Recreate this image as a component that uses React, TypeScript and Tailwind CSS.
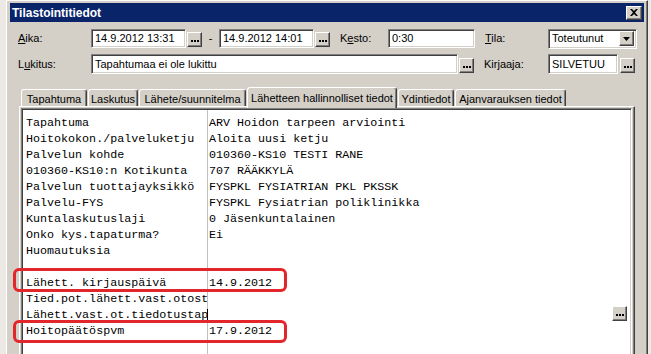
import React from "react";

const ui = "font-['Liberation_Sans',Arial,sans-serif]";
const mono = "font-['Liberation_Mono','Courier_New',monospace]";

function Dots() {
  return (
    <div className="w-[15px] h-[15px] shrink-0 bg-[#d4d0c8] border border-t-white border-l-white border-r-[#404040] border-b-[#404040] shadow-[inset_-1px_-1px_0_#808080] flex items-center justify-center gap-[1px] pt-[3px]">
      <span className="w-[2px] h-[2px] bg-black" />
      <span className="w-[2px] h-[2px] bg-black" />
      <span className="w-[2px] h-[2px] bg-black" />
    </div>
  );
}

function Edit({ className, children }: { className: string; children?: React.ReactNode }) {
  return (
    <div
      className={`${className} shrink-0 bg-white border border-t-[#808080] border-l-[#808080] border-b-white border-r-white shadow-[inset_1px_1px_0_#404040,inset_-1px_-1px_0_#d4d0c8] flex items-center pl-[3px] text-[11px] text-black whitespace-nowrap overflow-hidden`}
    >
      {children}
    </div>
  );
}

function Tab({ className, label, active }: { className: string; label: string; active?: boolean }) {
  if (active) {
    return (
      <div
        className={`${className} relative z-10 h-[21px] -mb-[2px] bg-[#d4d0c8] border-t border-l border-white border-r border-r-[#404040] shadow-[inset_-1px_0_0_#808080] rounded-t-[3px] flex items-start justify-center pt-[2px] text-[11px] text-black`}
      >
        {label}
      </div>
    );
  }
  return (
    <div
      className={`${className} h-[17px] bg-[#d4d0c8] border-t border-l border-white border-r border-r-[#404040] shadow-[inset_-1px_0_0_#808080] rounded-t-[3px] flex items-start justify-center pt-[1px] text-[11px] text-black`}
    >
      {label}
    </div>
  );
}

const left = [
  "Tapahtuma",
  "Hoitokokon./palveluketju",
  "Palvelun kohde",
  "010360-KS10:n Kotikunta",
  "Palvelun tuottajayksikkö",
  "Palvelu-FYS",
  "Kuntalaskutuslaji",
  "Onko kys.tapaturma?",
  "Huomautuksia",
  "",
  "Lähett. kirjauspäivä",
  "Tied.pot.lähett.vast.otost",
  "Lähett.vast.ot.tiedotustap",
  "Hoitopäätöspvm",
  "",
];

const right = [
  "ARV Hoidon tarpeen arviointi",
  "Aloita uusi ketju",
  "010360-KS10 TESTI RANE",
  "707 RÄÄKKYLÄ",
  "FYSPKL FYSIATRIAN PKL PKSSK",
  "FYSPKL Fysiatrian poliklinikka",
  "0 Jäsenkuntalainen",
  "Ei",
  "",
  "",
  "14.9.2012",
  "",
  "",
  "17.9.2012",
  "",
];

export default function App() {
  return (
    <div className={`${ui} relative w-[651px] h-[354px] overflow-hidden bg-[#ece9e4]`}>
      {/* window */}
      <div className="ml-[6px] mr-[3px] h-[380px] bg-[#d4d0c8] border-l border-t border-l-white border-t-white border-r border-r-[#404040] shadow-[inset_-1px_0_0_#808080] pt-[2px] pl-[3px] pr-[3px]">
        {/* title bar */}
        <div className="h-[19px] bg-[#0a246a] flex items-center justify-between pl-[2px] pr-[2px]">
          <span className="text-white font-bold text-[12px] leading-none">Tilastointitiedot</span>
          <div className="w-[16px] h-[14px] bg-[#d4d0c8] border border-t-white border-l-white border-r-[#404040] border-b-[#404040] shadow-[inset_-1px_-1px_0_#808080] flex items-center justify-center">
            <svg width="8" height="7" viewBox="0 0 8 7">
              <path d="M0 0h2l2 2 2-2h2L5 3.5 8 7H6L4 5 2 7H0l3-3.5z" fill="#000" />
            </svg>
          </div>
        </div>

        {/* row 1 */}
        <div className="mt-[7px] h-[19px] flex items-center text-[11px] text-black">
          <div className="w-[81px] pl-[8px]">
            <span className="underline">A</span>ika:
          </div>
          <Edit className="w-[95px] h-[19px]">14.9.2012 13:31</Edit>
          <div className="ml-[1px] mt-[2px]">
            <Dots />
          </div>
          <div className="w-[17px] text-center">-</div>
          <Edit className="w-[95px] h-[19px]">14.9.2012 14:01</Edit>
          <div className="ml-[1px] mt-[2px]">
            <Dots />
          </div>
          <div className="w-[58px] pl-[10px]">
            K<span className="underline">e</span>sto:
          </div>
          <Edit className="w-[87px] h-[19px]">0:30</Edit>
          <div className="w-[73px] pl-[10px]">
            <span className="underline">T</span>ila:
          </div>
          <div className="w-[89px] h-[20px] bg-white border border-t-[#808080] border-l-[#808080] border-b-white border-r-white shadow-[inset_1px_1px_0_#404040,inset_-1px_-1px_0_#d4d0c8] flex items-center pl-[3px] pr-[2px]">
            <span className="flex-1">Toteutunut</span>
            <div className="w-[15px] h-[15px] bg-[#d4d0c8] border border-t-white border-l-white border-r-[#404040] border-b-[#404040] shadow-[inset_-1px_-1px_0_#808080] flex items-center justify-center">
              <svg width="7" height="4" viewBox="0 0 7 4">
                <path d="M0 0h7L3.5 4z" fill="#000" />
              </svg>
            </div>
          </div>
        </div>

        {/* row 2 */}
        <div className="mt-[6px] h-[20px] flex items-center text-[11px] text-black">
          <div className="w-[81px] pl-[8px]">
            L<span className="underline">u</span>kitus:
          </div>
          <Edit className="w-[367px] h-[20px]">Tapahtumaa ei ole lukittu</Edit>
          <div className="ml-[1px] mt-[2px]">
            <Dots />
          </div>
          <div className="w-[74px] pl-[10px]">Kirjaaja:</div>
          <Edit className="w-[70px] h-[20px]">SILVETUU</Edit>
          <div className="ml-[2px] mt-[2px]">
            <Dots />
          </div>
        </div>

        {/* tabs */}
        <div className="mt-[13px] ml-[9px] w-[616px]">
          <div className="h-[19px] flex items-end gap-[1px] pl-[2px]">
            <Tab className="w-[66px]" label="Tapahtuma" />
            <Tab className="w-[50px]" label="Laskutus" />
            <Tab className="w-[107px]" label="Lähete/suunnitelma" />
            <Tab className="w-[150px]" label="Lähetteen hallinnolliset tiedot" active />
            <Tab className="w-[56px]" label="Ydintiedot" />
            <Tab className="w-[111px]" label="Ajanvarauksen tiedot" />
          </div>
          <div className="h-[260px] border-t border-l border-white border-r border-r-[#404040] shadow-[inset_-1px_0_0_#808080] pl-[1px] pt-[1px] pr-[2px]">
            <div className="relative h-[258px] bg-white border border-t-[#808080] border-l-[#808080] border-b-white border-r-white shadow-[inset_1px_1px_0_#404040,inset_-1px_-1px_0_#d4d0c8] p-[1px] flex">
              <div className={`${mono} w-[185px] shrink-0 border-r border-[#c0c0c0] pt-[5px] pl-[3px] overflow-hidden text-[11.7px] text-black`}>
                {left.map((t, i) => (
                  <div key={i} className="h-[16px] leading-[16px] whitespace-nowrap">
                    {t}
                  </div>
                ))}
              </div>
              <div className={`${mono} flex-1 pt-[5px] pl-[1px] text-[11.7px] text-black`}>
                {right.map((t, i) => (
                  <div key={i} className="h-[16px] leading-[16px] whitespace-nowrap flex items-center">
                    {i === 12 ? <span className="-ml-[2px] w-[1px] h-[13px] bg-black" /> : t}
                  </div>
                ))}
              </div>
              <div className="absolute left-[590px] top-[197px]">
                <Dots />
              </div>
            </div>
          </div>
        </div>
      </div>

      {/* annotation highlights */}
      <div className="absolute left-[13px] top-[268px] w-[274px] h-[24px] border-[3px] border-[#e3262b] rounded-[6px]" />
      <div className="absolute left-[13px] top-[320px] w-[274px] h-[23px] border-[3px] border-[#e3262b] rounded-[6px]" />
    </div>
  );
}
